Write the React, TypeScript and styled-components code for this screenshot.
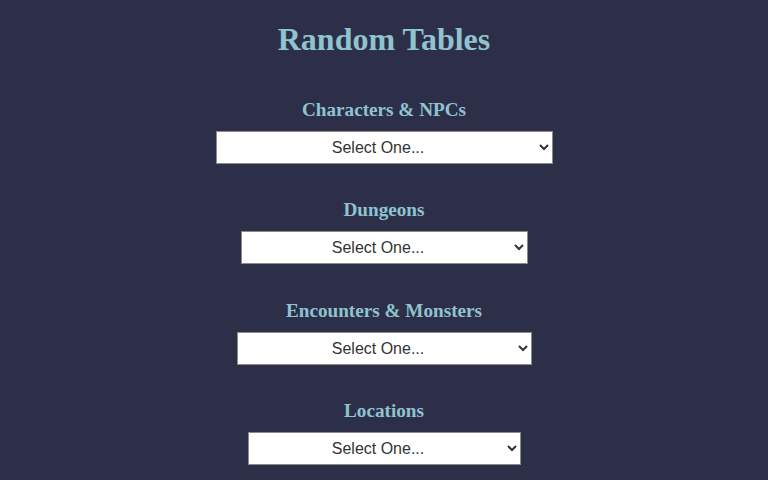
import styled, { createGlobalStyle } from "styled-components";

const GlobalStyle = createGlobalStyle`
  html, body {
    margin: 0;
    padding: 0;
    background: #2d2f48;
  }
  body {
    font-family: "Liberation Serif", "Times New Roman", serif;
  }
`

interface Table {
  title: string;
  width: number;
}

const tables: Table[] = [
  { title: "Characters & NPCs", width: 337 },
  { title: "Dungeons", width: 287 },
  { title: "Encounters & Monsters", width: 295 },
  { title: "Locations", width: 273 },
]

function App() {
  return <Page>
    <GlobalStyle />
    <Title>Random Tables</Title>
    <List>
      {tables.map((table) => (
        <Section key={table.title}>
          <Heading>{table.title}</Heading>
          <Picker width={table.width} defaultValue="">
            <option value="">Select One...</option>
          </Picker>
        </Section>
      ))}
    </List>
  </Page>
}
export default App;

const Page = styled.div`
  display: flex;
  flex-direction: column;
  align-items: center;
  padding-top: 21px;
  min-height: 480px;
  box-sizing: border-box;
`
const Title = styled.h1`
  margin: 0;
  font-size: 32px;
  line-height: 37px;
  font-weight: bold;
  color: #8fc3d0;
`
const List = styled.div`
  display: flex;
  flex-direction: column;
  align-items: center;
  gap: 35.3px;
  margin-top: 41px;
`
const Section = styled.div`
  display: flex;
  flex-direction: column;
  align-items: center;
  gap: 10px;
`
const Heading = styled.h3`
  margin: 0;
  font-size: 19.2px;
  line-height: 22px;
  font-weight: bold;
  color: #8fc3d0;
`
const Picker = styled.select<{ width: number }>`
  width: ${props => props.width}px;
  height: 33px;
  box-sizing: border-box;
  background: #ffffff;
  color: #333333;
  border: 1px solid #8a8a8a;
  border-radius: 0;
  font-family: "Liberation Sans", Arial, sans-serif;
  font-size: 16px;
  text-align: center;
  text-align-last: center;
  padding: 0 4px;
`
